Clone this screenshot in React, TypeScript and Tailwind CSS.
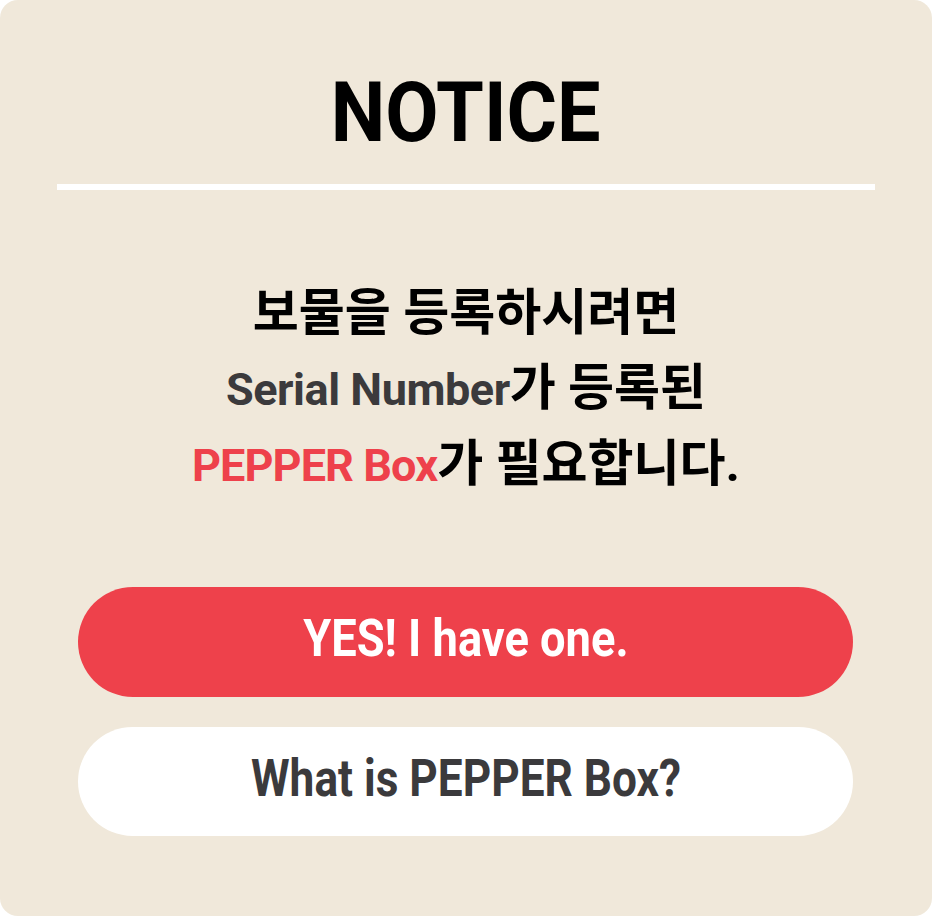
import React from 'react';

const font = "font-['Roboto','Noto_Sans_CJK_KR',sans-serif]";

export default function App() {
  return (
    <div className={`w-[932px] h-[916px] bg-white ${font}`}>
      <div className="flex h-full w-full flex-col rounded-[18px] bg-[#f0e8da]">
        {/* title */}
        <h1 className="pt-[71px] text-center text-[84px] font-bold leading-none text-black">
          <span className="inline-block scale-x-[0.92]">NOTICE</span>
        </h1>
        <div className="mx-[57px] mt-[29px] h-[6px] bg-white" />

        {/* message */}
        <div className="mt-[86px] text-center text-[50px] font-bold leading-[75px] text-black">
          <p>보물을 등록하시려면</p>
          <p>
            <span className="text-[45px] tracking-[-0.01em] text-[#3b3a3c]">Serial Number</span>가 등록된
          </p>
          <p>
            <span className="text-[45px] tracking-[-0.02em] text-[#ee414b]">PEPPER Box</span>가 필요합니다.
          </p>
        </div>

        {/* actions */}
        <div className="mt-[84px] flex flex-col gap-[30px] pl-[78px] pr-[79px]">
          <button className="h-[110px] rounded-full bg-[#ee414b] pb-[6px] text-[52px] font-bold text-white">
            <span className="inline-block scale-x-[0.87]">YES! I have one.</span>
          </button>
          <button className="h-[109px] rounded-full bg-white pb-[6px] text-[52px] font-bold text-[#3b3a3c]">
            <span className="inline-block scale-x-[0.85]">What is PEPPER Box?</span>
          </button>
        </div>
      </div>
    </div>
  );
}
